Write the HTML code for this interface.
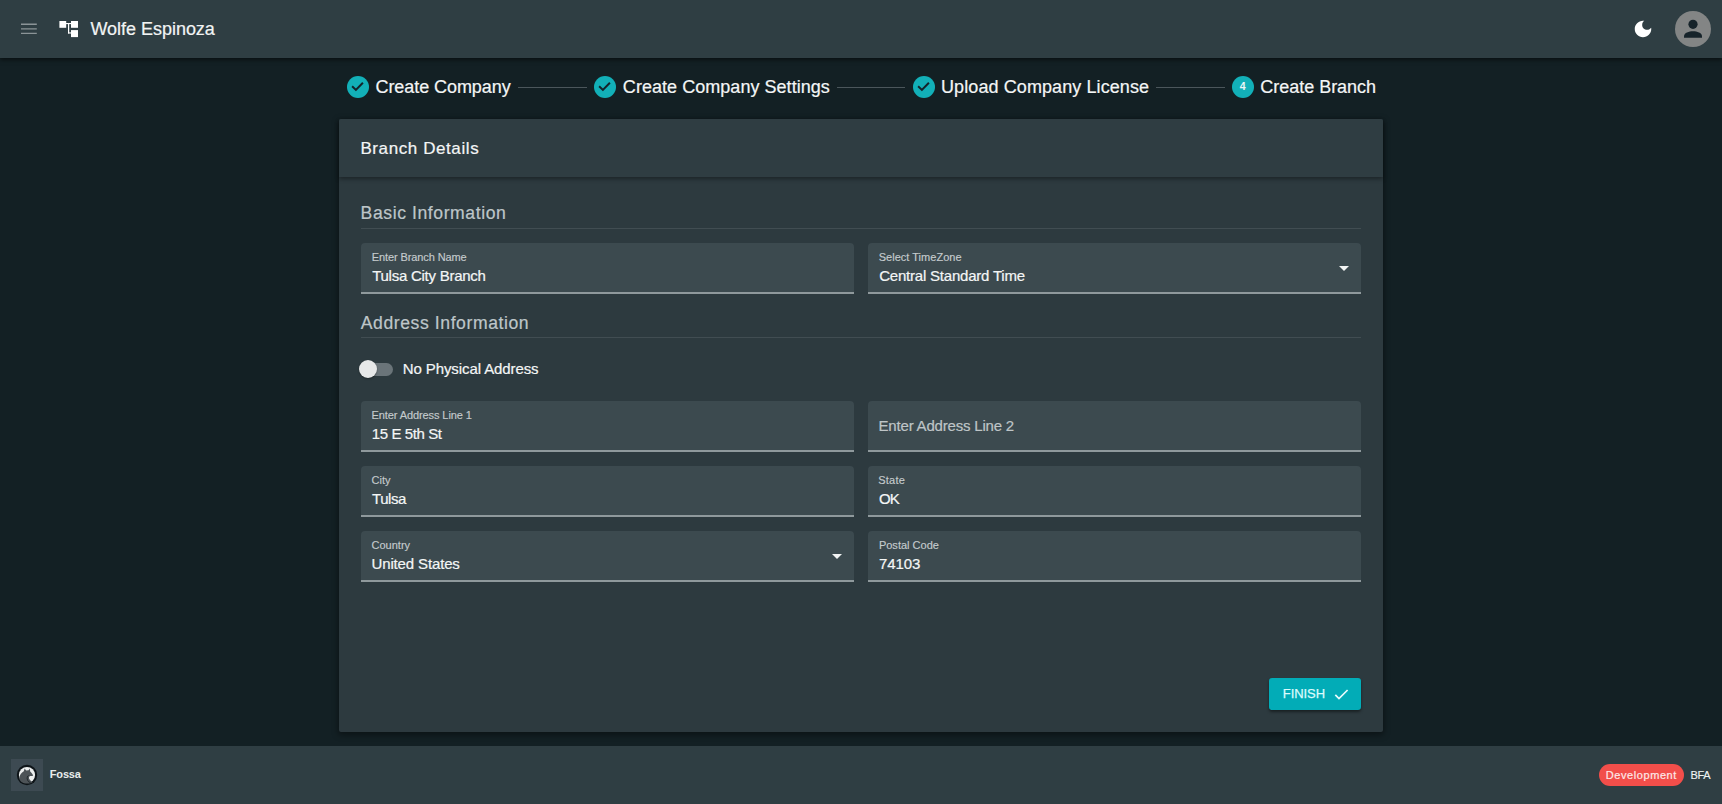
<!DOCTYPE html>
<html><head><meta charset="utf-8">
<style>
*{box-sizing:border-box;margin:0;padding:0}
html,body{width:1722px;height:804px;overflow:hidden;background:#132024;font-family:"Liberation Sans",sans-serif;}
.a{position:absolute;white-space:nowrap;line-height:1}
#hdr{position:absolute;left:0;top:0;width:1722px;height:58px;background:#2f3e43;box-shadow:0 2px 4px rgba(0,0,0,.5)}
#ftr{position:absolute;left:0;top:746px;width:1722px;height:58px;background:#2f3e43}
#card{position:absolute;left:339px;top:119px;width:1044px;height:613px;background:#2d3a3f;border-radius:2px;box-shadow:0 2px 6px 1px rgba(0,0,0,.4)}
#chdr{position:absolute;left:339px;top:119px;width:1044px;height:58px;background:#2f3d42;border-radius:2px 2px 0 0;box-shadow:0 2px 4px rgba(0,0,0,.38)}
.fld{position:absolute;width:493px;height:50.5px;background:#3c4a4f;border-radius:4px 4px 0 0}
.fld::after{content:"";position:absolute;left:0;right:0;top:49px;height:2px;background:#8f999c}
.div{position:absolute;left:361px;width:1000px;height:1px;background:#414d52}
.circ{position:absolute;width:22px;height:22px;border-radius:50%;background:#12b0b8;top:76px}
.line{position:absolute;top:86.5px;height:1px;background:#4b565b}
.arrow{position:absolute;width:0;height:0;border-left:5px solid transparent;border-right:5px solid transparent;border-top:5px solid #f2f4f4}
</style></head>
<body>
<div id="hdr"></div>
<!-- hamburger -->
<svg style="position:absolute;left:0;top:0" width="60" height="58" viewBox="0 0 60 58">
<path d="M21 24.3H36.8M21 28.9H36.8M21 33.4H36.8" stroke="#8b9497" stroke-width="1.4" fill="none"/>
</svg>
<!-- logo -->
<svg style="position:absolute;left:0;top:0" width="90" height="58" viewBox="0 0 90 58">
<rect x="59.4" y="21" width="6.8" height="6.8" fill="#fff"/>
<rect x="71" y="21" width="7" height="6.8" fill="#fff"/>
<rect x="71" y="30.1" width="7" height="7" fill="#fff"/>
<rect x="66" y="23" width="5.2" height="1.1" fill="#fff"/>
<rect x="68" y="23.5" width="1.2" height="10" fill="#fff"/>
<rect x="68" y="32.4" width="3.2" height="1.1" fill="#fff"/>
</svg>
<!-- moon -->
<svg style="position:absolute;left:1631.8px;top:18.2px" width="22" height="22" viewBox="0 0 24 24">
<path d="M12 3c-4.97 0-9 4.03-9 9s4.03 9 9 9 9-4.03 9-9c0-.46-.04-.92-.1-1.36-.98 1.37-2.58 2.26-4.4 2.26-2.98 0-5.4-2.42-5.4-5.4 0-1.81.89-3.42 2.26-4.4-.44-.06-.9-.1-1.36-.1z" fill="#fff"/>
</svg>
<!-- avatar -->
<div style="position:absolute;left:1675px;top:11px;width:36px;height:36px;border-radius:50%;background:#838585"></div>
<svg style="position:absolute;left:1675px;top:11px" width="36" height="36" viewBox="0 0 36 36">
<circle cx="18" cy="13.3" r="4.6" fill="#16232a"/>
<path d="M9 26.8 V25.2 C9 21.6 14 20.2 18 20.2 C22 20.2 27 21.6 27 25.2 V26.8 Z" fill="#16232a"/>
</svg>

<!-- stepper -->
<div class="circ" style="left:346.5px"></div>
<svg style="position:absolute;left:346.5px;top:76px" width="22" height="22" viewBox="0 0 22 22"><path d="M5.1 10.3 L8.9 13.9 L15.9 6.8" stroke="#14232a" stroke-width="2" fill="none"/></svg>
<div class="line" style="left:518px;width:69px"></div>
<div class="circ" style="left:594px"></div>
<svg style="position:absolute;left:594px;top:76px" width="22" height="22" viewBox="0 0 22 22"><path d="M5.1 10.3 L8.9 13.9 L15.9 6.8" stroke="#14232a" stroke-width="2" fill="none"/></svg>
<div class="line" style="left:837px;width:68px"></div>
<div class="circ" style="left:912.5px"></div>
<svg style="position:absolute;left:912.5px;top:76px" width="22" height="22" viewBox="0 0 22 22"><path d="M5.1 10.3 L8.9 13.9 L15.9 6.8" stroke="#14232a" stroke-width="2" fill="none"/></svg>
<div class="line" style="left:1155.5px;width:69.5px"></div>
<div class="circ" style="left:1232px"></div>
<div class="a" style="left:1231.6px;top:80.9px;width:22px;text-align:center;font-size:10.6px;font-weight:700;color:#eaf6f7">4</div>

<div id="card"></div>
<div id="chdr"></div>
<div class="div" style="top:227.5px"></div>

<div class="fld" style="left:361px;top:243px"></div>
<div class="fld" style="left:868px;top:243px"><div class="arrow" style="left:471px;top:23px"></div></div>

<div class="div" style="top:337px"></div>

<!-- toggle -->
<div style="position:absolute;left:361px;top:363px;width:31.5px;height:12.5px;border-radius:6.5px;background:#6a7479"></div>
<div style="position:absolute;left:359px;top:360px;width:18px;height:18px;border-radius:50%;background:#e6e8e8;box-shadow:0 1px 2px rgba(0,0,0,.35)"></div>

<div class="fld" style="left:361px;top:401px"></div>
<div class="fld" style="left:868px;top:401px"></div>
<div class="fld" style="left:361px;top:466px"></div>
<div class="fld" style="left:868px;top:466px"></div>
<div class="fld" style="left:361px;top:531px"><div class="arrow" style="left:471px;top:23px"></div></div>
<div class="fld" style="left:868px;top:531px"></div>

<!-- finish button -->
<div style="position:absolute;left:1269px;top:678px;width:92px;height:32px;border-radius:3px;background:#02acb7;box-shadow:0 2px 3px rgba(0,0,0,.45)"></div>
<svg style="position:absolute;left:1334px;top:688px" width="15" height="13" viewBox="0 0 15 13"><path d="M1.3 6.8 L5 10.6 L13.6 2" stroke="#e8fbfc" stroke-width="1.7" fill="none"/></svg>

<div id="ftr"></div>
<div style="position:absolute;left:11px;top:759px;width:32px;height:32px;background:#3d4a52"></div>
<svg style="position:absolute;left:16px;top:764.2px" width="22" height="22" viewBox="0 0 22 22">
<circle cx="11" cy="11" r="10.2" fill="#0e1418"/>
<circle cx="11" cy="11" r="8.1" fill="#eceeee"/>
<path d="M3.2 14.5 C3.5 11 5.5 8.5 7.8 7.2 L8.6 4.6 L10.2 6.4 L12.6 6.3 L13.8 4.6 L14.2 7.4 C15.6 8.6 16.6 10.2 17.2 11.6 C16 12.2 15 12.2 14.2 12 C12.8 12.3 12.6 14 13.6 15.6 C14.4 16.8 15.6 17.8 16.6 18.2 C14 19.8 9 20.2 5.6 18 C4.4 17 3.4 15.8 3.2 14.5 Z" fill="#4d5357"/>
<path d="M13.8 11.3 C11.6 11.6 10.8 14.2 12.2 16.4 C13 17.6 14.4 18.4 15.6 18.6 L14 18.9 C11.6 17.6 10.2 15.2 10.8 13.2 C11.4 11.6 12.6 11.2 13.8 11.3 Z" fill="#1a2024"/>
</svg>

<div style="position:absolute;left:1599px;top:764px;width:85px;height:22px;border-radius:11px;background:#f24e4a"></div>

<div class="a" style="left:90.48px;top:20.02px;font-size:18px;font-weight:400;letter-spacing:-0.027px;color:#f2f4f4;-webkit-text-stroke:0.2px currentColor">Wolfe Espinoza</div>
<div class="a" style="left:375.47px;top:78.02px;font-size:18px;font-weight:400;letter-spacing:-0.064px;color:#f4f6f6;-webkit-text-stroke:0.2px currentColor">Create Company</div>
<div class="a" style="left:622.87px;top:78.02px;font-size:18px;font-weight:400;letter-spacing:0.039px;color:#f4f6f6;-webkit-text-stroke:0.2px currentColor">Create Company Settings</div>
<div class="a" style="left:941.02px;top:78.02px;font-size:18px;font-weight:400;letter-spacing:0.09px;color:#f4f6f6;-webkit-text-stroke:0.2px currentColor">Upload Company License</div>
<div class="a" style="left:1260.27px;top:78.02px;font-size:18px;font-weight:400;letter-spacing:-0.021px;color:#f4f6f6;-webkit-text-stroke:0.2px currentColor">Create Branch</div>
<div class="a" style="left:360.42px;top:140.07px;font-size:17px;font-weight:400;letter-spacing:0.592px;color:#f4f6f6;-webkit-text-stroke:0.2px currentColor">Branch Details</div>
<div class="a" style="left:360.59px;top:205.22px;font-size:17.6px;font-weight:400;letter-spacing:0.584px;color:#bec6c9;-webkit-text-stroke:0.2px currentColor">Basic Information</div>
<div class="a" style="left:360.76px;top:314.52px;font-size:17.6px;font-weight:400;letter-spacing:0.578px;color:#bec6c9;-webkit-text-stroke:0.2px currentColor">Address Information</div>
<div class="a" style="left:402.75px;top:361.03px;font-size:15px;font-weight:400;letter-spacing:-0.096px;color:#f4f6f6;-webkit-text-stroke:0.2px currentColor">No Physical Address</div>
<div class="a" style="left:371.7px;top:252.0px;font-size:11px;font-weight:400;letter-spacing:-0.1px;color:#c5cbcd;-webkit-text-stroke:0.15px currentColor">Enter Branch Name</div>
<div class="a" style="left:878.71px;top:252.0px;font-size:11px;font-weight:400;letter-spacing:0.021px;color:#c5cbcd;-webkit-text-stroke:0.15px currentColor">Select TimeZone</div>
<div class="a" style="left:371.5px;top:410.0px;font-size:11px;font-weight:400;letter-spacing:-0.092px;color:#c5cbcd;-webkit-text-stroke:0.15px currentColor">Enter Address Line 1</div>
<div class="a" style="left:371.46px;top:475.0px;font-size:11px;font-weight:400;letter-spacing:0.058px;color:#c5cbcd;-webkit-text-stroke:0.15px currentColor">City</div>
<div class="a" style="left:878.31px;top:475.0px;font-size:11px;font-weight:400;letter-spacing:0.2px;color:#c5cbcd;-webkit-text-stroke:0.15px currentColor">State</div>
<div class="a" style="left:371.46px;top:540.0px;font-size:11px;font-weight:400;letter-spacing:0.016px;color:#c5cbcd;-webkit-text-stroke:0.15px currentColor">Country</div>
<div class="a" style="left:878.9px;top:540.0px;font-size:11px;font-weight:400;letter-spacing:0.012px;color:#c5cbcd;-webkit-text-stroke:0.15px currentColor">Postal Code</div>
<div class="a" style="left:372.17px;top:267.93px;font-size:15px;font-weight:400;letter-spacing:-0.253px;color:#f4f6f6;-webkit-text-stroke:0.2px currentColor">Tulsa City Branch</div>
<div class="a" style="left:879.18px;top:267.93px;font-size:15px;font-weight:400;letter-spacing:-0.211px;color:#f4f6f6;-webkit-text-stroke:0.2px currentColor">Central Standard Time</div>
<div class="a" style="left:371.82px;top:425.93px;font-size:15px;font-weight:400;letter-spacing:-0.405px;color:#f4f6f6;-webkit-text-stroke:0.2px currentColor">15 E 5th St</div>
<div class="a" style="left:371.97px;top:490.93px;font-size:15px;font-weight:400;letter-spacing:-0.427px;color:#f4f6f6;-webkit-text-stroke:0.2px currentColor">Tulsa</div>
<div class="a" style="left:879.01px;top:490.93px;font-size:15px;font-weight:400;letter-spacing:-1.0px;color:#f4f6f6;-webkit-text-stroke:0.2px currentColor">OK</div>
<div class="a" style="left:371.51px;top:555.93px;font-size:15px;font-weight:400;letter-spacing:-0.141px;color:#f4f6f6;-webkit-text-stroke:0.2px currentColor">United States</div>
<div class="a" style="left:879.0px;top:555.93px;font-size:15px;font-weight:400;letter-spacing:-0.117px;color:#f4f6f6;-webkit-text-stroke:0.2px currentColor">74103</div>
<div class="a" style="left:878.55px;top:417.83px;font-size:15px;font-weight:400;letter-spacing:-0.193px;color:#bfc5c7;-webkit-text-stroke:0.2px currentColor">Enter Address Line 2</div>
<div class="a" style="left:1282.87px;top:686.96px;font-size:13px;font-weight:400;letter-spacing:-0.073px;color:#dcfbfd;-webkit-text-stroke:0.25px #dcfbfd">FINISH</div>
<div class="a" style="left:49.81px;top:768.92px;font-size:11px;font-weight:700;letter-spacing:-0.173px;color:#e9eded;">Fossa</div>
<div class="a" style="left:1605.8px;top:769.8px;font-size:11px;font-weight:400;letter-spacing:0.575px;color:#fde8e8;-webkit-text-stroke:0.2px #fde8e8">Development</div>
<div class="a" style="left:1690.4px;top:769.8px;font-size:11px;font-weight:400;letter-spacing:-0.301px;color:#eef2f2;-webkit-text-stroke:0.15px currentColor">BFA</div>

</body></html>
